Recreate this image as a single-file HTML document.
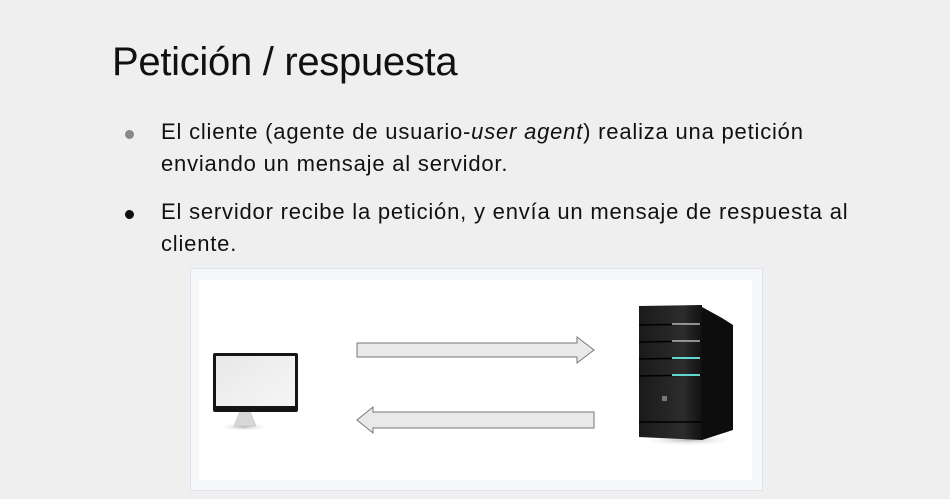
<!DOCTYPE html>
<html><head><meta charset="utf-8"><style>
html,body{margin:0;padding:0}
body{width:950px;height:499px;background:#efefef;position:relative;overflow:hidden;font-family:"Liberation Sans",sans-serif}
.title{position:absolute;left:112px;top:40px;font-size:40px;color:#111;letter-spacing:-0.3px}
.b{position:absolute;left:161px;font-size:22px;color:#111;line-height:32px;letter-spacing:0.8px;white-space:nowrap}
.dot{position:absolute;left:125px;width:9px;height:9px;border-radius:50%}
.box{position:absolute;left:190px;top:268px;width:571px;height:221px;background:#f6f7f9;border:1px solid #dde3ea}
.inner{position:absolute;left:199px;top:280px;width:553px;height:200px;background:#fff}
</style></head><body>
<div class="title">Petición / respuesta</div>
<div class="dot" style="top:130px;background:#888"></div>
<div class="b" style="top:116px">El cliente (agente de usuario-<i>user agent</i>) realiza una petición<br>enviando un mensaje al servidor.</div>
<div class="dot" style="top:210px;background:#111"></div>
<div class="b" style="top:196px">El servidor recibe la petición, y envía un mensaje de respuesta al<br>cliente.</div>
<div class="box"></div><div class="inner"></div>
<svg style="position:absolute;left:0;top:0" width="950" height="499">
<defs>
<linearGradient id="scr" x1="0" y1="0" x2="1" y2="1"><stop offset="0" stop-color="#e8e8e8"/><stop offset="1" stop-color="#f6f6f6"/></linearGradient>
<linearGradient id="front" x1="0" y1="0" x2="1" y2="0"><stop offset="0" stop-color="#1a1a1a"/><stop offset="0.7" stop-color="#2c2c2c"/><stop offset="1" stop-color="#111"/></linearGradient>
<radialGradient id="sh"><stop offset="0" stop-color="#888" stop-opacity=".6"/><stop offset="1" stop-color="#fff" stop-opacity="0"/></radialGradient>
</defs>
<ellipse cx="244" cy="427" rx="26" ry="4" fill="url(#sh)"/>
<path d="M240 411 L250 411 L256 426 L234 426 Z" fill="#d8d8d8" stroke="#bbb" stroke-width=".5"/>
<rect x="213" y="353" width="85" height="59" rx="2" fill="#161616"/>
<rect x="216" y="356" width="79" height="50" fill="url(#scr)"/>
<path d="M357 343 H577 V337 L594 350 L577 363 V357 H357 Z" fill="#e9e9e9" stroke="#777" stroke-width="1"/>
<path d="M594 412 H373 V407 L357 420 L373 433 V428 H594 Z" fill="#e9e9e9" stroke="#777" stroke-width="1"/>
<ellipse cx="688" cy="440" rx="50" ry="6" fill="url(#sh)"/>
<path d="M702 307 L722 318 L733 325 L733 430 L702 440 Z" fill="#0d0d0d"/>
<path d="M639 306 L702 305 L702 440 L639 437 Z" fill="url(#front)"/>
<g stroke="#000" stroke-width="1.5">
<line x1="639" y1="325" x2="702" y2="324"/><line x1="639" y1="342" x2="702" y2="341"/><line x1="639" y1="359" x2="702" y2="358"/><line x1="639" y1="376" x2="702" y2="375"/><line x1="639" y1="422" x2="702" y2="422"/>
</g>
<line x1="672" y1="324" x2="700" y2="324" stroke="#bbb" stroke-width="1.5"/>
<line x1="672" y1="341" x2="700" y2="341" stroke="#bbb" stroke-width="1.5"/>
<line x1="672" y1="358" x2="700" y2="358" stroke="#5fd6d0" stroke-width="2"/>
<line x1="672" y1="375" x2="700" y2="375" stroke="#5fd6d0" stroke-width="2"/>
<rect x="662" y="396" width="5" height="5" fill="#777"/>
</svg>
</body></html>
